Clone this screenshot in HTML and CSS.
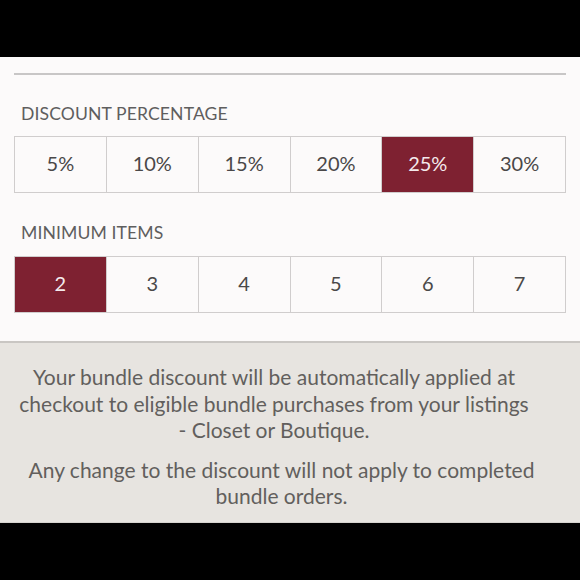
FILE: index.html
```html
<!DOCTYPE html>
<html>
<head>
<meta charset="utf-8">
<link rel="stylesheet" href="styles.css">
</head>
<body>
<div class="screen">
  <div class="topbar"></div>
  <section class="panel">
    <div class="rule"></div>
    <div class="label">DISCOUNT PERCENTAGE</div>
    <div class="options">
      <div class="opt">5%</div>
      <div class="opt">10%</div>
      <div class="opt">15%</div>
      <div class="opt">20%</div>
      <div class="opt selected">25%</div>
      <div class="opt">30%</div>
    </div>
    <div class="label label-second">MINIMUM ITEMS</div>
    <div class="options">
      <div class="opt selected">2</div>
      <div class="opt">3</div>
      <div class="opt">4</div>
      <div class="opt">5</div>
      <div class="opt">6</div>
      <div class="opt">7</div>
    </div>
  </section>
  <section class="info">
    <p class="note note-first">Your bundle discount will be automatically applied at<br>checkout to eligible bundle purchases from your listings<br>- Closet or Boutique.</p>
    <p class="note note-second">Any change to the discount will not apply to completed<br>bundle orders.</p>
  </section>
  <div class="bottombar"></div>
</div>
</body>
</html>
```
FILE: styles.css
```css
* { box-sizing: border-box; }
html, body { margin: 0; padding: 0; background: #000; }
body { font-family: Lato, "Open Sans", sans-serif; }
.screen { width: 580px; height: 580px; display: flex; flex-direction: column; background: #000; }
.topbar { height: 57px; background: #000; }
.panel {
  background: #fcfafa;
  padding: 16px 14px 28px;
  border-bottom: 2px solid #c9c6c3;
}
.rule { height: 2px; background: #c8c6c6; }
.label {
  margin-top: 29px;
  padding-left: 7px;
  height: 20px;
  line-height: 20px;
  font-size: 17.6px;
  color: #5f5e5e;
  letter-spacing: 0.1px;
}
.label-second { margin-top: 30px; }
.options {
  margin-top: 12px;
  display: grid;
  grid-template-columns: repeat(6, 1fr);
  border: 1px solid #d0cdcd;
  border-right: none;
  height: 57px;
}
.label-second + .options { margin-top: 13px; }
.opt {
  border-right: 1px solid #d0cdcd;
  display: flex;
  align-items: center;
  justify-content: center;
  padding-bottom: 3px;
  font-size: 20px;
  color: #4a4848;
  background: #fcfafa;
}
.opt.selected { background: #7e2131; color: #f4eaec; }
.info {
  background: #e7e4e0;
  height: 180px;
  padding: 21px 14px 0;
  border-bottom: 1px solid #d6d3cf;
}
.note {
  margin: 0;
  text-align: center;
  font-size: 21px;
  line-height: 26.5px;
  color: #625f5d;
  white-space: nowrap;
}
.note-first { padding-right: 32px; }
.note-second { margin-top: 13px; padding-right: 17px; }
.bottombar { flex: 1; background: #000; }
```
